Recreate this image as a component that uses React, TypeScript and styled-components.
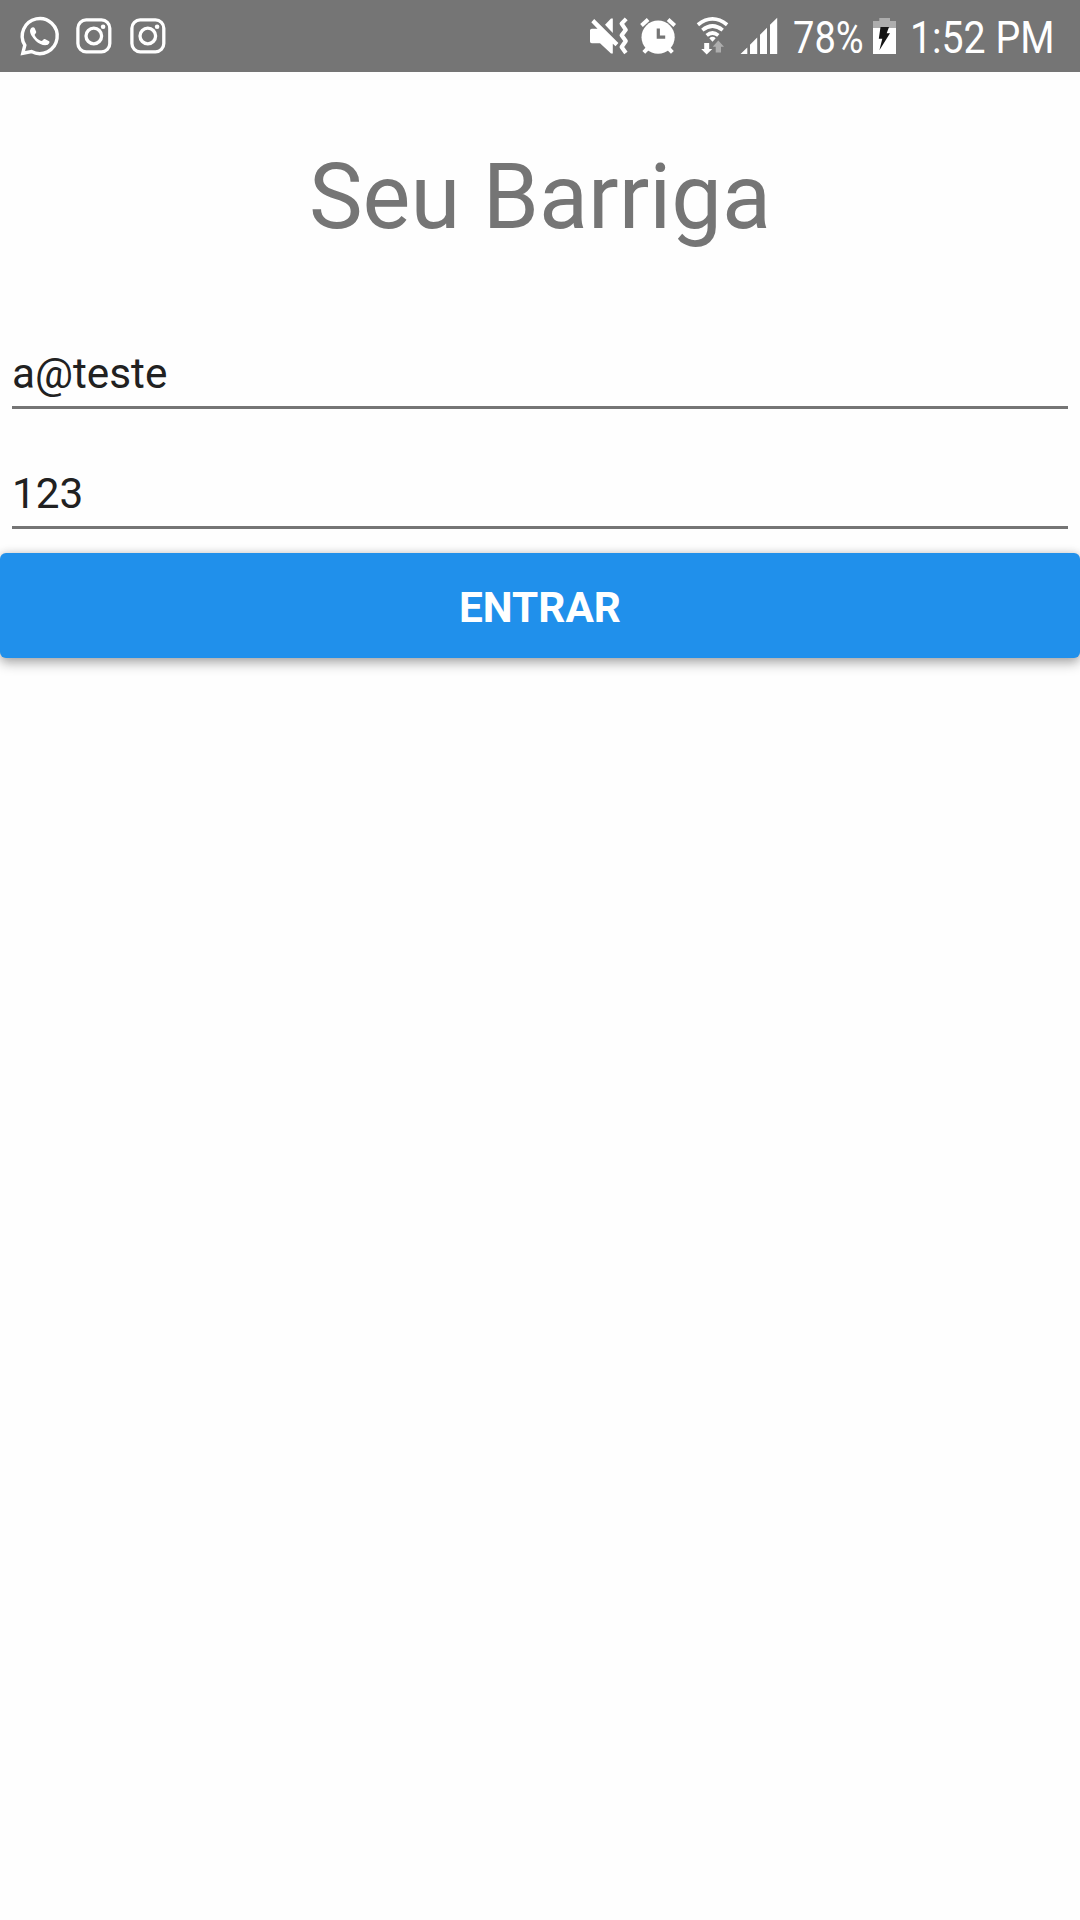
import React, { useState } from "react";
import styled, { createGlobalStyle } from "styled-components";

const GlobalStyle = createGlobalStyle`
  *, *::before, *::after { box-sizing: border-box; }
  html, body { margin: 0; padding: 0; background: #fefefe; }
  body { font-family: Roboto, "Liberation Sans", sans-serif; overflow: hidden; }
`;

const Screen = styled.div`
  display: flex;
  flex-direction: column;
  width: 1080px;
  height: 1920px;
  background: #fefefe;
  overflow: hidden;
`;

const StatusBar = styled.header`
  display: flex;
  justify-content: space-between;
  height: 72px;
  flex: none;
  padding: 0 20px 0 16px;
  background: #757575;
  color: #fff;
`;

const StatusGroup = styled.div`
  display: flex;
  align-items: flex-start;
`;

const StatusIcon = styled.svg`
  display: block;
  flex: none;
  height: 72px;
`;

const StatusText = styled.div<{ $width: number; $squeeze: number }>`
  width: ${(p) => p.$width}px;
  height: 72px;
  flex: none;
  font-size: 45px;
  line-height: 75px;
  white-space: nowrap;
  transform: scaleX(${(p) => p.$squeeze});
  transform-origin: 0 50%;
`;

const Title = styled.h1`
  margin: 0;
  padding-top: 71px;
  height: 248px;
  font-size: 90.3px;
  line-height: 108px;
  font-weight: 400;
  text-align: center;
  color: #757575;
`;

const Form = styled.form`
  display: flex;
  flex-direction: column;
`;

const Field = styled.input`
  display: block;
  height: 89px;
  margin: 0 12px 31px;
  padding: 21px 0 0;
  border: 0;
  border-bottom: 3px solid #757575;
  border-radius: 0;
  outline: 0;
  background: transparent;
  color: #212121;
  font: 400 42.3px/50px Roboto, "Liberation Sans", sans-serif;
`;

const SubmitButton = styled.button`
  height: 105px;
  margin-top: -7px;
  padding: 4px 0 0;
  border: 0;
  border-radius: 6px;
  background: #2090eb;
  color: #fff;
  font: 700 42.3px/50px Roboto, "Liberation Sans", sans-serif;
  text-align: center;
  box-shadow: 0 6px 12px rgba(0, 0, 0, 0.26), 0 0 10px rgba(0, 0, 0, 0.18);
`;

/* Glyphs share one coordinate system: x along the bar, y from its top. */
const Glyph = ({ x, w, children }: { x: number; w: number; children: React.ReactNode }) => (
  <StatusIcon width={w} viewBox={`${x} 0 ${w} 72`}>
    {children}
  </StatusIcon>
);

const WhatsApp = () => (
  <Glyph x={16} w={54}>
    <path
      d="M24.8 45.2A17.5 17.5 0 1 1 31.5 51.5L22.8 53.2Z"
      fill="none" stroke="#fff" strokeWidth="3.4" strokeLinejoin="miter"
    />
    <path
      d="M31 28.2C32 27 33.9 26.7 34.6 28L36.2 31.8C36.5 33.1 34.8 34 34.6 35C35.8 38 38.3 40 41.3 41.1C42.7 40.9 43.6 38.7 44.9 39.1L49.1 41.2C50.3 42.2 48.5 44.8 46.7 45.1C43.3 45.8 38.8 43.7 35.8 40.9C32.6 37.8 29.4 33.3 30.1 30.1Z"
      fill="#fff"
    />
  </Glyph>
);

const Instagram = () => (
  <Glyph x={70} w={54}>
    <rect x="77.9" y="19.9" width="31.9" height="31.9" rx="8.3" fill="none" stroke="#fff" strokeWidth="3.3" />
    <circle cx="93.8" cy="36" r="7.8" fill="none" stroke="#fff" strokeWidth="3.3" />
    <circle cx="103.1" cy="26.7" r="2.3" fill="#fff" />
  </Glyph>
);

const Muted = () => (
  <Glyph x={586} w={50}>
    <path
      d="M590 30.5Q590 28.8 591.8 28.8H597.5L591.3 22.3L594.2 19L618.4 43L615.5 46.3L612.8 43.8V53.4H611L600 43.2H591.8Q590 43.2 590 41.4Z"
      fill="#fff"
    />
    <path d="M605 24.8L611 18.6H612.8V33Z" fill="#fff" />
    <path
      d="M626.2 18.8L621.6 23.6L625.8 29.8L621.6 35.2L625.8 41L621.6 47L625.9 53"
      fill="none" stroke="#fff" strokeWidth="4.1" strokeLinejoin="round"
    />
  </Glyph>
);

const Alarm = () => (
  <Glyph x={636} w={56}>
    <path d="M641.5 25.4L648.1 19.6M674.7 25.4L668.1 19.6" stroke="#fff" strokeWidth="4" />
    <path d="M643.8 52.3L649 47M672.4 52.3L667.2 47" stroke="#fff" strokeWidth="4" />
    <circle cx="658.1" cy="37.2" r="16.6" fill="#fff" />
    <path d="M658.3 28.6V37.2H665.2" fill="none" stroke="#757575" strokeWidth="3.2" />
  </Glyph>
);

const Wifi = () => (
  <Glyph x={692} w={44}>
    <path
      d="M697.9 24.8Q712.5 13 727.1 24.8M702.3 30.1Q712.5 21.9 722.7 30.1M706.7 35.4Q712.5 30.6 718.3 35.4"
      fill="none" stroke="#fff" strokeWidth="3.7"
    />
    <path d="M709.3 38.3Q712.5 35.4 715.7 38.3L712.5 41.8Z" fill="#fff" />
    <path d="M704.2 43H709.2V49H712.3L706.7 54.6L701.2 49H704.2Z" fill="#fff" />
    <path d="M718.3 40.4L724 46.7H721V52.4H715.7V46.7H712.7Z" fill="#adadad" />
  </Glyph>
);

const Signal = () => (
  <Glyph x={736} w={57}>
    <path
      d="M740.5 54L747.3 47.4V54ZM750 54V44.7L757.2 37.5V54ZM760 54V34.7L767 27.8V54ZM770 54V24.8L777.2 17.8V54Z"
      fill="#fff"
    />
  </Glyph>
);

const Battery = () => (
  <Glyph x={869} w={41}>
    <path d="M879.3 18H890V21H896V28.2H873V21H879.3Z" fill="#adadad" />
    <path d="M873 28H896V54H873Z" fill="#fff" />
    <path d="M880.5 27.1H889L886.7 33.2H890L879.4 50.2L882.3 38.8H878.8Z" fill="#151515" />
  </Glyph>
);

export default function App() {
  const [email, setEmail] = useState("a@teste");
  const [password, setPassword] = useState("123");

  return (
    <>
      <GlobalStyle />
      <Screen>
        <StatusBar>
          <StatusGroup>
            <WhatsApp />
            <Instagram />
            <Instagram />
          </StatusGroup>
          <StatusGroup>
            <Muted />
            <Alarm />
            <Wifi />
            <Signal />
            <StatusText $width={76} $squeeze={0.846}>78%</StatusText>
            <Battery />
            <StatusText $width={150} $squeeze={0.872}>1:52 PM</StatusText>
          </StatusGroup>
        </StatusBar>
        <Title>Seu Barriga</Title>
        <Form onSubmit={(e) => e.preventDefault()}>
          <Field value={email} onChange={(e) => setEmail(e.target.value)} />
          <Field value={password} onChange={(e) => setPassword(e.target.value)} />
          <SubmitButton type="submit">ENTRAR</SubmitButton>
        </Form>
      </Screen>
    </>
  );
}
